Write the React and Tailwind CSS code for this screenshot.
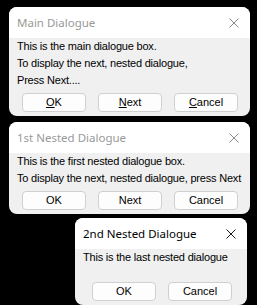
import React from 'react';

const Close = ({ active }) => (
  <svg width="10" height="10" viewBox="0 0 10 10" className="shrink-0">
    <path d="M0.5 0.5 L9.5 9.5 M9.5 0.5 L0.5 9.5" stroke={active ? '#1a1a1a' : '#8a8a8a'} strokeWidth="1" fill="none" />
  </svg>
);

const Btn = ({ children }) => (
  <div className="w-[64px] h-[19px] flex items-center justify-center bg-[#fdfdfd] border border-[#d0d0d0] rounded-[4px] text-black">
    {children}
  </div>
);

const U = ({ c }) => <span className="underline underline-offset-[1px]">{c}</span>;

const Dialog = ({ title, active, lines, buttons, width, gap, btnPad }) => (
  <div className={`${width} rounded-[8px] overflow-hidden bg-[#f0f0f0]`}>
    <div className="h-[31px] bg-white flex items-center justify-between pl-[8px] pr-[11px]">
      <span
        className={`text-[11.5px] ${active ? 'text-black' : 'text-[#999999]'}`}
        style={{ fontFamily: '"Noto Sans", "Open Sans", sans-serif' }}
      >
        {title}
      </span>
      <Close active={active} />
    </div>
    <div className="px-[8px] text-[11px] leading-[17px] text-black tracking-[-0.2px]" style={{ fontFamily: '"Liberation Sans", Arial, sans-serif' }}>
      {lines.map((l, i) => (
        <div key={i}>{l}</div>
      ))}
    </div>
    <div className={`flex ${gap} ${btnPad} pb-[4px] text-[11px]`} style={{ fontFamily: '"Liberation Sans", Arial, sans-serif' }}>
      {buttons.map((b, i) => (
        <Btn key={i}>{b}</Btn>
      ))}
    </div>
  </div>
);

export default function App() {
  return (
    <div className="w-[257px] h-[305px] bg-black overflow-hidden flex flex-col pt-[7px]">
      <div className="ml-[9px]">
        <Dialog
          title="Main Dialogue"
          width="w-[241px]"
          lines={['This is the main dialogue box.', 'To display the next, nested dialogue,', 'Press Next....']}
          buttons={[
            <span><U c="O" />K</span>,
            <span><U c="N" />ext</span>,
            <span><U c="C" />ancel</span>,
          ]}
          gap="gap-[12px]"
          btnPad="pl-[13px] pt-[4px]"
        />
      </div>
      <div className="ml-[9px] mt-[6px]">
        <Dialog
          title="1st Nested Dialogue"
          width="w-[241px]"
          lines={['This is the first nested dialogue box.', 'To display the next, nested dialogue, press Next']}
          buttons={['OK', 'Next', 'Cancel']}
          gap="gap-[12px]"
          btnPad="pl-[13px] pt-[4px]"
        />
      </div>
      <div className="ml-[75px] mt-[4px]">
        <Dialog
          title="2nd Nested Dialogue"
          active
          width="w-[172px]"
          lines={['This is the last nested dialogue']}
          buttons={['OK', 'Cancel']}
          gap="gap-[12px]"
          btnPad="pl-[17px] pt-[16px]"
        />
      </div>
    </div>
  );
}
